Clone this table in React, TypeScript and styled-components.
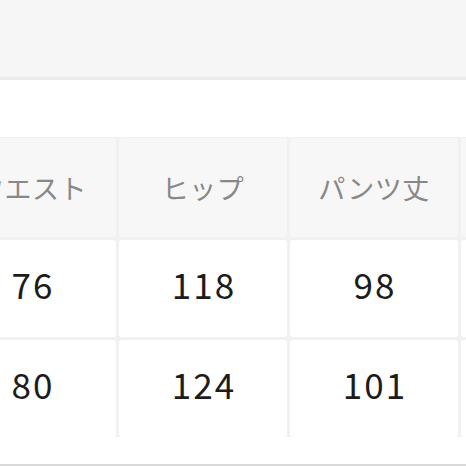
import React from "react";
import styled, { createGlobalStyle } from "styled-components";

const GlobalStyle = createGlobalStyle`
  html, body {
    margin: 0;
    padding: 0;
    background: #ffffff;
  }
  body {
    font-family: "Noto Sans CJK JP", "Noto Sans", sans-serif;
    overflow: hidden;
  }
`;

const Page = styled.div`
  width: 466px;
  height: 466px;
  display: flex;
  flex-direction: column;
  overflow: hidden;
  background: #ffffff;
`;

const TopBand = styled.div`
  height: 77px;
  flex: none;
  background: #f6f6f6;
  border-bottom: 3px solid #ececec;
`;

const Spacer = styled.div<{ $h: number }>`
  height: ${(p) => p.$h}px;
  flex: none;
`;

const SizeTable = styled.div`
  flex: none;
  margin-left: -52px;
  display: grid;
  grid-template-columns: repeat(4, 168px);
  grid-template-rows: 99px 97px 97px;
  gap: 3px;
  padding-top: 1px;
  background: #f1f1f1;
`;

const Cell = styled.div<{ $head?: boolean }>`
  display: flex;
  align-items: center;
  justify-content: center;
  box-sizing: border-box;
  border-radius: 3px;
  background: ${(p) => (p.$head ? "#f7f7f7" : "#ffffff")};
  color: ${(p) => (p.$head ? "#888888" : "#1c1c1c")};
  font-size: ${(p) => (p.$head ? "27px" : "35px")};
  font-weight: 400;
  letter-spacing: ${(p) => (p.$head ? "0.5px" : "2px")};
  padding-bottom: ${(p) => (p.$head ? "0" : "10px")};
  padding-left: ${(p) => (p.$head ? "0" : "2px")};
  white-space: nowrap;
`;

const Filler = styled.div`
  flex: 1;
  background: #ffffff;
`;

const BottomRule = styled.div`
  height: 2px;
  flex: none;
  background: #d9d9d9;
`;

const headers = ["ウエスト", "ヒップ", "パンツ丈", ""];
const rows = [
  ["76", "118", "98", ""],
  ["80", "124", "101", ""],
];

export default function App() {
  return (
    <>
      <GlobalStyle />
      <Page>
        <TopBand />
        <Spacer $h={57} />
        <SizeTable>
          {headers.map((h, i) => (
            <Cell key={`h${i}`} $head>
              {h}
            </Cell>
          ))}
          {rows.map((r, ri) =>
            r.map((v, ci) => <Cell key={`r${ri}c${ci}`}>{v}</Cell>)
          )}
        </SizeTable>
        <Filler />
        <BottomRule />
      </Page>
    </>
  );
}
